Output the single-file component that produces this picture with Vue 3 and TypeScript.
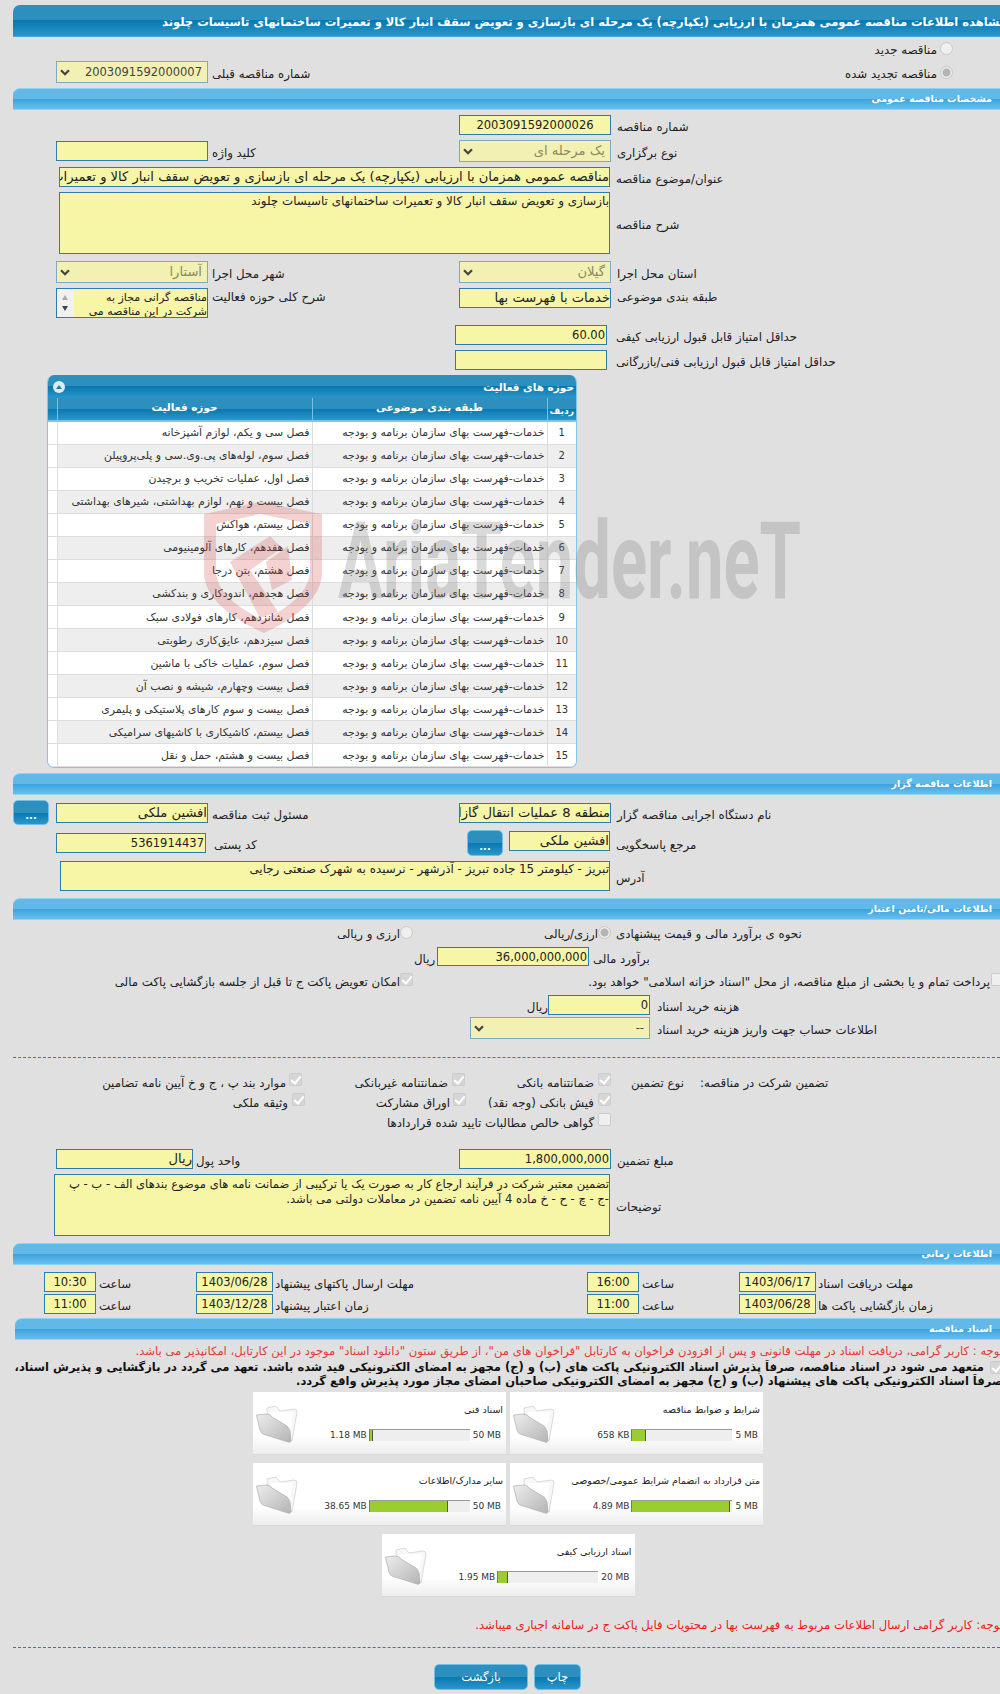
<script setup lang="ts">
const category = 'خدمات-فهرست بهای سازمان برنامه و بودجه'
const topics: string[] = [
  'فصل سی و یکم، لوازم آشپزخانه',
  'فصل سوم، لوله‌های پی.وی.سی و پلی‌پروپیلن',
  'فصل اول، عملیات تخریب و برچیدن',
  'فصل بیست و نهم، لوازم بهداشتی، شیرهای بهداشتی',
  'فصل بیستم، هواکش',
  'فصل هفدهم، کارهای آلومینیومی',
  'فصل هشتم، بتن درجا',
  'فصل هجدهم، اندودکاری و بندکشی',
  'فصل شانزدهم، کارهای فولادی سبک',
  'فصل سیزدهم، عایق‌کاری رطوبتی',
  'فصل سوم، عملیات خاکی با ماشین',
  'فصل بیست وچهارم، شیشه و نصب آن',
  'فصل بیست و سوم کارهای پلاستیکی و پلیمری',
  'فصل بیستم، کاشیکاری با کاشیهای سرامیکی',
  'فصل بیست و هشتم، حمل و نقل',
]
interface Doc { title: string; used: string; max: string; pct: number }
const docRows: Doc[][] = [
  [
    { title: 'اسناد فنی', used: '1.18 MB', max: '50 MB', pct: 3 },
    { title: 'شرایط و ضوابط مناقصه', used: '658 KB', max: '5 MB', pct: 14 },
  ],
  [
    { title: 'سایر مدارک/اطلاعات', used: '38.65 MB', max: '50 MB', pct: 78 },
    { title: 'متن قرارداد به انضمام شرایط عمومی/خصوصی', used: '4.89 MB', max: '5 MB', pct: 98 },
  ],
  [{ title: 'اسناد ارزیابی کیفی', used: '1.95 MB', max: '20 MB', pct: 10 }],
]
</script>

<template>
  <div class="page">
    <div class="bar title-bar"><span class="title-text">مشاهده اطلاعات مناقصه عمومی همزمان با ارزیابی (یکپارچه) یک مرحله ای بازسازی و تعویض سقف انبار کالا و تعمیرات ساختمانهای تاسیسات چلوند</span></div>

    <div class="radio-row r1"><span class="lbl">مناقصه جدید</span><span class="radio"></span></div>
    <div class="grid2 r2">
      <div class="cell left">
        <div class="inp sel w152 h22"><svg class="caret" viewBox="0 0 10 7"><path d="M1 1.2 L5 5.2 L9 1.2" /></svg><b class="dark digits">2003091592000007</b></div>
        <span class="lbl">شماره مناقصه قبلی</span>
      </div>
      <div class="radio-row"><span class="lbl">مناقصه تجدید شده</span><span class="radio dot"></span></div>
    </div>

    <div class="bar sec s1"><span>مشخصات مناقصه عمومی</span></div>

    <div class="grid2 r-num">
      <div></div>
      <div class="cell right"><div class="inp w152 center">2003091592000026</div><span class="lbl">شماره مناقصه</span></div>
    </div>
    <div class="grid2 r-type">
      <div class="cell left"><div class="inp w152"></div><span class="lbl">کلید واژه</span></div>
      <div class="cell right"><div class="inp sel w152 h22"><svg class="caret" viewBox="0 0 10 7"><path d="M1 1.2 L5 5.2 L9 1.2" /></svg><b class="gray">یک مرحله ای</b></div><span class="lbl">نوع برگزاری</span></div>
    </div>
    <div class="wide r-title">
      <div class="inp big full-title">مناقصه عمومی همزمان با ارزیابی (یکپارچه) یک مرحله ای بازسازی و تعویض سقف انبار کالا و تعمیرات ساختمانهای تاسیسات چلوند</div>
      <span class="lbl">عنوان/موضوع مناقصه</span>
    </div>
    <div class="wide r-desc">
      <div class="inp area desc">بازسازی و تعویض سقف انبار کالا و تعمیرات ساختمانهای تاسیسات چلوند</div>
      <span class="lbl mid">شرح مناقصه</span>
    </div>
    <div class="grid2 r-prov">
      <div class="cell left"><div class="inp sel w152 h22"><svg class="caret" viewBox="0 0 10 7"><path d="M1 1.2 L5 5.2 L9 1.2" /></svg><b class="gray">آستارا</b></div><span class="lbl">شهر محل اجرا</span></div>
      <div class="cell right"><div class="inp sel w152 h22"><svg class="caret" viewBox="0 0 10 7"><path d="M1 1.2 L5 5.2 L9 1.2" /></svg><b class="gray">گیلان</b></div><span class="lbl">استان محل اجرا</span></div>
    </div>
    <div class="grid2 r-cat">
      <div class="cell left top">
        <div class="listbox">
          <div class="scroll"><i class="up"></i><i class="down"></i></div>
          <div class="ltext">مناقصه گرانی مجاز به<br />شرکت در این مناقصه می</div>
        </div>
        <span class="lbl up-lbl">شرح کلی حوزه فعالیت</span>
      </div>
      <div class="cell right top">
        <div class="inp w152 big">خدمات با فهرست بها</div>
        <span class="lbl up-lbl">طبقه بندی موضوعی</span>
      </div>
    </div>
    <div class="score r-s1"><div class="inp w152 end">60.00</div><span class="lbl">حداقل امتیاز قابل قبول ارزیابی کیفی</span></div>
    <div class="score r-s2"><div class="inp w152"></div><span class="lbl">حداقل امتیاز قابل قبول ارزیابی فنی/بازرگانی</span></div>

    <div class="panel">
      <div class="panel-head">
        <span class="collapse"><i></i></span>
        <span class="ph-text">حوزه های فعالیت</span>
      </div>
      <table class="tbl">
        <thead>
          <tr>
            <th class="c-pad"></th>
            <th class="c-act">حوزه فعالیت</th>
            <th class="c-cat">طبقه بندی موضوعی</th>
            <th class="c-no">ردیف</th>
          </tr>
        </thead>
        <tbody>
          <tr v-for="(t, i) in topics" :key="i" :class="{ alt: i % 2 === 1 }">
            <td class="c-pad"></td>
            <td class="c-act">{{ t }}</td>
            <td class="c-cat">{{ category }}</td>
            <td class="c-no">{{ i + 1 }}</td>
          </tr>
        </tbody>
      </table>
    </div>

    <div class="bar sec s2"><span>اطلاعات مناقصه گزار</span></div>

    <div class="org1">
      <button class="dots" type="button">...</button>
      <div class="inp w152 big">افشین ملکی</div>
      <span class="lbl gap4">مسئول ثبت مناقصه</span>
      <div class="inp w152 big">منطقه 8 عملیات انتقال گازایران</div>
      <span class="lbl">نام دستگاه اجرایی مناقصه گزار</span>
    </div>
    <div class="org2">
      <div class="inp w150 num">5361914437</div>
      <span class="lbl gap8">کد پستی</span>
      <button class="dots" type="button">...</button>
      <div class="inp w101 big">افشین ملکی</div>
      <span class="lbl">مرجع پاسخگویی</span>
    </div>
    <div class="wide r-addr">
      <div class="inp area addr">تبریز - کیلومتر 15 جاده تبریز - آذرشهر - نرسیده به شهرک صنعتی رجایی</div>
      <span class="lbl mid">آدرس</span>
    </div>

    <div class="bar sec s3"><span>اطلاعات مالی/تامین اعتبار</span></div>

    <div class="fin-radio">
      <span class="lbl fr-a">ارزی و ریالی</span><span class="radio"></span>
      <div class="fr-gap"></div>
      <span class="lbl fr-b">ارزی/ریالی</span><span class="radio dot"></span>
      <span class="lbl fr-l">نحوه ی برآورد مالی و قیمت پیشنهادی</span>
    </div>
    <div class="fin-est">
      <span class="lbl unit">ریال</span>
      <div class="inp w152 num">36,000,000,000</div>
      <span class="lbl est-l">برآورد مالی</span>
    </div>
    <div class="fin-check">
      <span class="lbl fc-a">امکان تعویض پاکت ج تا قبل از جلسه بازگشایی پاکت مالی</span>
      <span class="cbx on"></span>
      <div class="fc-gap"></div>
      <span class="lbl fc-b">پرداخت تمام و یا بخشی از مبلغ مناقصه، از محل "اسناد خزانه اسلامی" خواهد بود.</span>
      <span class="cbx"></span>
    </div>
    <div class="fin-fee">
      <span class="lbl unit fee-u">ریال</span>
      <div class="inp w102 num">0</div>
      <span class="lbl l7">هزینه خرید اسناد</span>
    </div>
    <div class="fin-acc">
      <div class="inp sel w180 h22"><svg class="caret" viewBox="0 0 10 7"><path d="M1 1.2 L5 5.2 L9 1.2" /></svg><b class="dark digits">--</b></div>
      <span class="lbl l7">اطلاعات حساب جهت واریز هزینه خرید اسناد</span>
    </div>

    <div class="dash d1"></div>

    <div class="g-row g1">
      <span class="lbl a0">موارد بند پ ، ج و خ آیین نامه تضامین</span><span class="cbx on m3"></span>
      <span class="lbl a1">ضمانتنامه غیربانکی</span><span class="cbx on m4"></span>
      <span class="lbl a2">ضمانتنامه بانکی</span><span class="cbx on m4"></span>
      <span class="lbl g-type">نوع تضمین</span>
      <span class="lbl g-head">تضمین شرکت در مناقصه:</span>
    </div>
    <div class="g-row">
      <span class="lbl b0">وثیقه ملکی</span><span class="cbx on m4"></span>
      <span class="lbl b1">اوراق مشارکت</span><span class="cbx on m3"></span>
      <span class="lbl b2">فیش بانکی (وجه نقد)</span><span class="cbx on m4"></span>
    </div>
    <div class="g-row">
      <span class="lbl c0">گواهی خالص مطالبات تایید شده قراردادها</span><span class="cbx m4"></span>
    </div>

    <div class="amt">
      <div class="inp w137 big">ریال</div>
      <span class="lbl gap3">واحد پول</span>
      <div class="inp w152 num">1,800,000,000</div>
      <span class="lbl">مبلغ تضمین</span>
    </div>
    <div class="wide r-note">
      <div class="inp area note">تضمین معتبر شرکت در فرآیند ارجاع کار به صورت یک یا ترکیبی از ضمانت نامه های موضوع بندهای الف - ب - پ<br />-ج - چ - ح - خ ماده 4 آیین نامه تضمین در معاملات دولتی می باشد.</div>
      <span class="lbl mid">توضیحات</span>
    </div>

    <div class="bar sec s4"><span>اطلاعات زمانی</span></div>

    <div class="time t1">
      <div class="inp w52 center">10:30</div><span class="lbl tl1">ساعت</span>
      <div class="inp w77 center">1403/06/28</div><span class="lbl tl2">مهلت ارسال پاکتهای پیشنهاد</span>
      <div class="inp w52 center">16:00</div><span class="lbl tl1">ساعت</span>
      <div class="inp w77 center">1403/06/17</div><span class="lbl tl3">مهلت دریافت اسناد</span>
    </div>
    <div class="time t2">
      <div class="inp w52 center">11:00</div><span class="lbl tl1">ساعت</span>
      <div class="inp w77 center">1403/12/28</div><span class="lbl tl2">زمان اعتبار پیشنهاد</span>
      <div class="inp w52 center">11:00</div><span class="lbl tl1">ساعت</span>
      <div class="inp w77 center">1403/06/28</div><span class="lbl tl3">زمان بازگشایی پاکت ها</span>
    </div>

    <div class="bar sec s5"><span>اسناد مناقصه</span></div>

    <div class="clip-text red-1">توجه : کاربر گرامی، دریافت اسناد در مهلت قانونی و پس از افزودن فراخوان به کارتابل "فراخوان های من"، از طریق ستون "دانلود اسناد" موجود در این کارتابل، امکانپذیر می باشد.</div>
    <div class="clip-text bold-1"><span class="cbx on inline"></span>متعهد می شود در اسناد مناقصه، صرفاً پذیرش اسناد الکترونیکی پاکت های (ب) و (ج) مجهز به امضای الکترونیکی قید شده باشد. تعهد می گردد در بازگشایی و پذیرش اسناد،</div>
    <div class="clip-text bold-2">صرفاً اسناد الکترونیکی پاکت های پیشنهاد (ب) و (ج) مجهز به امضای الکترونیکی صاحبان امضای مجاز مورد پذیرش واقع گردد.</div>

    <div class="docs">
      <div v-for="(row, ri) in docRows" :key="ri" class="doc-row">
        <div v-for="d in row" :key="d.title" class="doc">
          <svg class="folder" viewBox="0 0 42 38" aria-hidden="true">
            <defs>
              <linearGradient id="fg" x1="0" y1="0" x2="1" y2="1">
                <stop offset="0" stop-color="#ededed" />
                <stop offset="1" stop-color="#b4b4b4" />
              </linearGradient>
            </defs>
            <path d="M11 3 L20 1 L24 6 L38 4 Q41 4 41 7 L36 36 L12 22 Z" fill="#f7f7f7" stroke="#d2d2d2" stroke-width=".8" />
            <path d="M15 7 L37 7 L34 26 L17 14 Z" fill="#ffffff" />
            <path d="M0.5 10 L11 9 Q14 9 16 12 L31 21 Q33 23 34 26 L35 36 Q34 38 32 37 L7 29 Q5 28 4 25 Z" fill="url(#fg)" stroke="#adadad" stroke-width=".7" />
          </svg>
          <div class="doc-body">
            <div class="doc-title">{{ d.title }}</div>
            <div class="doc-meter">
              <span class="m-max">{{ d.max }}</span>
              <div class="track"><div class="fill" :style="{ width: d.pct + '%' }"></div></div>
              <span class="m-used">{{ d.used }}</span>
            </div>
          </div>
        </div>
      </div>
    </div>

    <div class="clip-text red-2">توجه: کاربر گرامی ارسال اطلاعات مربوط به فهرست بها در محتویات فایل پاکت ج در سامانه اجباری میباشد.</div>
    <div class="dash d2"></div>

    <div class="actions">
      <button class="act back" type="button">بازگشت</button>
      <button class="act print" type="button">چاپ</button>
    </div>

    <div class="watermark" aria-hidden="true">
      <svg class="shield" viewBox="0 0 125 135">
        <path d="M4 14 L60 2 L122 14 L122 76 Q118 108 64 133 Q8 108 4 76 Z M16 24 L16 74 Q20 100 63 120 Q106 100 110 74 L110 24 L60 14 Z" fill="#d8504e" fill-rule="evenodd" />
        <path d="M30 62 L70 36 L82 48 L50 70 L78 112 L60 118 Z M66 62 L88 46 L92 80 L72 90 Z" fill="#d8504e" />
      </svg>
      <span class="wm-text">AriaTender.neT</span>
    </div>
  </div>
</template>

<style>
html, body { margin: 0; background: #e0e0e0; }
</style>

<style scoped>
.page {
  position: relative;
  width: 1000px;
  height: 1694px;
  overflow: hidden;
  box-sizing: border-box;
  padding-left: 13px;
  background: #e0e0e0;
  font-family: "DejaVu Sans", sans-serif;
  font-size: 11.8px;
  color: #222;
}
.bar {
  box-sizing: border-box;
  width: 1010px;
  border-radius: 7px 7px 0 0;
  color: #fff;
  font-weight: bold;
  white-space: nowrap;
}
.title-bar {
  margin-top: 5px;
  height: 32px;
  padding: 10px 0 0 149px;
  font-size: 11.5px;
  background: linear-gradient(#2d8fbe 0, #2d8fbe 50%, #0878ae 50%, #2b96cc 100%);
  border-bottom: 1px solid #4aa6dc;
}
.title-text { display: inline-block; direction: rtl; }
.sec {
  height: 22px;
  direction: rtl;
  padding: 3px 31px 0 0;
  font-size: 9.5px;
  line-height: 14px;
  background: linear-gradient(#62b8e6 0, #62b8e6 50%, #3ba2de 50%, #6abfee 100%);
  border-top: 1px solid #8fd3f4;
  border-bottom: 1px solid #8fd3f4;
}
.s1 { margin-top: 5px; }
.s2 { margin-top: 5px; }
.s3 { margin-top: 7px; }
.s4 { margin-top: 7px; }
.s5 { margin-top: 4px; margin-left: 2px; width: 1008px; }

.lbl {
  box-sizing: border-box;
  height: 20px;
  white-space: nowrap;
  direction: rtl;
  line-height: 20px;
  padding-top: 2px;
  flex: none;
}
.inp {
  box-sizing: border-box;
  height: 20px;
  flex: none;
  border: 1px solid #2b7cb1;
  background: #f7f5a6;
  direction: rtl;
  white-space: nowrap;
  overflow: hidden;
  font-size: 11.5px;
  line-height: 18px;
  color: #222;
}
.big { font-size: 13.1px; }
.num { direction: ltr; text-align: right; padding-right: 1px; }
.center { text-align: center; direction: ltr; }
.end { direction: ltr; text-align: right; padding-right: 1px; }
.w152 { width: 152px; }
.w150 { width: 150px; }
.w137 { width: 137px; }
.w180 { width: 180px; }
.w102 { width: 102px; }
.w101 { width: 101px; }
.w52 { width: 52px; }
.w77 { width: 77px; }
.h22 { height: 22px; line-height: 20px; }
.sel {
  display: flex;
  justify-content: space-between;
  align-items: center;
  direction: ltr;
  padding: 0 5px 0 3px;
  background: #f3f0b3;
  border-color: #7fa9c2;
}
.sel b { font-weight: normal; direction: rtl; font-size: 13.1px; }
.sel b.digits { font-size: 11.5px; color: #444; }
.gray { color: #8a8a60; }
.caret { width: 10px; height: 7px; flex: none; }
.caret path { fill: none; stroke: #444; stroke-width: 2.2; }

.radio {
  flex: none;
  box-sizing: border-box;
  display: inline-block;
  width: 13px; height: 13px;
  border-radius: 50%;
  border: 1px solid #c8c8c8;
  background: #efefef;
}
.radio.dot { background: radial-gradient(circle, #b4b4b4 0 3.5px, #ececec 4.5px); }
.cbx {
  flex: none;
  box-sizing: border-box;
  position: relative;
  display: inline-block;
  width: 13px; height: 13px;
  border: 1px solid #ccc;
  border-radius: 2px;
  background: #efefef;
  margin-bottom: 3px;
}
.cbx.on { background: #d6d6d6; }
.cbx.on::after {
  content: "";
  position: absolute;
  left: 3px; top: 0;
  width: 4px; height: 8px;
  border: solid #fff;
  border-width: 0 2px 2px 0;
  transform: rotate(40deg);
}

.radio-row {
  display: flex;
  align-items: center;
  justify-content: flex-end;
  gap: 3px;
  padding-right: 47px;
}
.r1 { margin-top: 1px; height: 20px; width: 987px; box-sizing: border-box; }
.r2 { margin-top: 3px; height: 22px; align-items: center; }
.grid2 {
  display: grid;
  grid-template-columns: 446px 541px;
}
.cell { display: flex; align-items: center; }
.cell.top { align-items: flex-start; }
.left { padding-left: 43px; gap: 4px; }
.right { gap: 6px; }
.r-num { margin-top: 5px; height: 20px; }
.r-type { margin-top: 5px; height: 22px; }
.wide {
  display: flex;
  align-items: flex-start;
  justify-content: flex-start;
  gap: 6px;
}
.r-title { margin-top: 5px; padding-left: 46px; }
.full-title { width: 551px; }
.r-desc { margin-top: 5px; padding-left: 46px; }
.area { white-space: normal; line-height: 16px; font-size: 11.9px; }
.desc { width: 551px; height: 62px; }
.mid { align-self: center; }
.r-prov { margin-top: 7px; height: 22px; }
.r-cat { margin-top: 5px; height: 30px; }
.up-lbl { line-height: 16px; padding-top: 1px; }
.listbox {
  box-sizing: border-box;
  flex: none;
  display: flex;
  width: 152px;
  height: 30px;
  border: 1px solid #2b7cb1;
  background: #f7f5a6;
  overflow: hidden;
}
.scroll {
  flex: none;
  position: relative;
  width: 17px;
  background: #f1f1f1;
}
.scroll i {
  position: absolute;
  left: 5px;
  border-left: 3.5px solid transparent;
  border-right: 3.5px solid transparent;
}
.up { top: 6px; border-bottom: 5px solid #aaa; }
.down { bottom: 6px; border-top: 5px solid #444; }
.ltext {
  flex: 1;
  direction: rtl;
  white-space: nowrap;
  overflow: hidden;
  padding-top: 2px;
  font-size: 11px;
  line-height: 14px;
  color: #222;
}
.score { display: flex; align-items: center; gap: 9px; padding-left: 442px; }
.r-s1 { margin-top: 7px; height: 20px; }
.r-s2 { margin-top: 5px; height: 20px; }

.panel {
  box-sizing: border-box;
  width: 530px;
  margin: 5px 0 0 34px;
  background: #fff;
  border-radius: 7px;
  border: 1px solid #86c5e8;
  border-top: 0;
  overflow: hidden;
}
.panel-head {
  box-sizing: border-box;
  height: 23px;
  display: flex;
  align-items: center;
  justify-content: space-between;
  padding: 0 2px 0 5px;
  color: #fff;
  font-weight: bold;
  font-size: 10.5px;
  direction: ltr;
  background: linear-gradient(#2d8fbe 0, #2d8fbe 50%, #0878ae 50%, #2b96cc 100%);
}
.ph-text { direction: rtl; }
.collapse {
  width: 12px; height: 12px;
  border-radius: 50%;
  background: #dfe9f2;
  display: flex;
  align-items: center;
  justify-content: center;
}
.collapse i {
  border-left: 3.5px solid transparent;
  border-right: 3.5px solid transparent;
  border-bottom: 4px solid #2a76a8;
}
.tbl {
  width: 100%;
  border-collapse: collapse;
  table-layout: fixed;
  font-size: 10.9px;
}
.tbl th {
  box-sizing: border-box;
  height: 23px;
  padding: 0 0 4px;
  color: #fff;
  font-weight: bold;
  font-size: 10.5px;
  direction: rtl;
  border-left: 1px solid #7cbfe6;
  border-bottom: 2px solid #76c8ec;
  background: linear-gradient(#2d8fbe 0, #2d8fbe 50%, #0878ae 50%, #2b96cc 100%);
}
.tbl th:first-child { border-left: 0; }
.tbl td {
  box-sizing: border-box;
  height: 23.07px;
  padding: 0 2px;
  direction: rtl;
  white-space: nowrap;
  overflow: hidden;
  text-align: right;
  border-left: 1px solid #ddd;
  border-bottom: 1px solid #ddd;
  color: #333;
}
.tbl tr.alt td { background: #eee; }
.tbl tr.alt td.c-pad { background: #fff; }
.tbl .c-pad { width: 9px; padding: 0; border-left: 0; }
.tbl .c-act { width: 255px; }
.tbl .c-cat { width: 235px; }
.tbl .c-no { width: 29px; text-align: center; font-size: 10px; }
.tbl th.c-no { font-size: 9.2px; padding: 2px 0 0; }

.org1, .org2, .amt, .fin-radio, .fin-est, .fin-check, .fin-fee, .fin-acc, .time, .g-row {
  display: flex;
  align-items: center;
}
.dots {
  box-sizing: border-box;
  flex: none;
  width: 36px;
  border: 1px solid #6ec0ea;
  border-radius: 5px;
  padding: 6px 0 0;
  color: #fff;
  font: bold 10px "DejaVu Sans", sans-serif;
  background: linear-gradient(#2d8fbe 0, #2d8fbe 50%, #0878ae 50%, #2b96cc 100%);
}
.org1 { margin-top: 5px; height: 25px; }
.org1 .dots { height: 25px; margin-right: 7px; }
.org1 .gap4 { margin-left: 4px; width: 247px; text-align: left; }
.org1 .lbl:last-child { margin-left: 6px; }
.org2 { margin-top: 5px; height: 26px; padding-left: 43px; }
.org2 .gap8 { margin-left: 8px; width: 253px; text-align: left; }
.org2 .dots { height: 26px; margin-right: 6px; }
.org2 .w101 { margin-bottom: 4px; }
.org2 .lbl:last-child { margin-left: 6px; }
.r-addr { margin-top: 5px; padding-left: 47px; }
.addr { width: 550px; height: 30px; line-height: 15px; }

.fin-radio { margin-top: 2px; height: 20px; padding-left: 324px; }
.fr-a { width: 63px; text-align: right; }
.fr-gap { width: 127px; flex: none; }
.fr-b { width: 58px; text-align: right; }
.fr-l { margin-left: 5px; }
.fin-est { margin-top: 5px; height: 19px; padding-left: 401px; }
.fin-est .inp { height: 19px; }
.unit { width: 23px; text-align: left; }
.fee-u { width: 20px; }
.est-l { margin-left: 4px; }
.fin-check { margin-top: 4px; height: 20px; padding-left: 99px; }
.fin-check .cbx { margin-bottom: 1px; }
.fc-a { width: 288px; text-align: right; }
.fc-gap { width: 167px; flex: none; }
.fc-b { width: 410px; text-align: right; margin-right: 1px; }
.fin-fee { margin-top: 5px; height: 20px; padding-left: 515px; }
.l7 { margin-left: 7px; }
.fin-acc { margin-top: 2px; height: 22px; padding-left: 457px; }

.dash { width: 987px; height: 0; border-top: 1px dashed #2b7cb1; }
.d1 { margin-top: 18px; }
.g-row { height: 20px; }
.g1 { margin-top: 13px; }
.m3 { margin-left: 3px; }
.m4 { margin-left: 4px; }
.a0, .a1, .a2, .b0, .b1, .b2, .c0 { text-align: right; }
.a0 { width: 273px; }
.a1 { width: 146px; }
.a2 { width: 129px; }
.g-type { margin-left: 20px; width: 53px; text-align: left; }
.g-head { margin-left: 16px; }
.b0 { width: 275px; }
.b1 { width: 145px; }
.b2 { width: 128px; }
.c0 { width: 581px; }

.amt { margin-top: 18px; height: 20px; padding-left: 43px; }
.amt .gap3 { margin-left: 3px; width: 263px; text-align: left; }
.amt .lbl:last-child { margin-left: 6px; }
.r-note { margin-top: 5px; padding-left: 41px; }
.note { width: 556px; height: 62px; padding-top: 2px; line-height: 14.5px; font-size: 11.55px; }

.time { height: 20px; padding-left: 31px; }
.t1 { margin-top: 7px; }
.t2 { margin-top: 2px; }
.tl1 { width: 100px; padding-left: 3px; box-sizing: border-box; text-align: left; }
.tl2 { width: 314px; padding-left: 2px; box-sizing: border-box; text-align: left; }
.tl3 { margin-left: 2px; }

.clip-text {
  width: 1003px;
  margin-left: -13px;
  box-sizing: border-box;
  direction: rtl;
  white-space: nowrap;
  overflow: hidden;
}
.red-1 { margin-top: 3px; line-height: 16px; color: #e03a3a; font-size: 11.6px; }
.bold-1, .bold-2 { font-weight: bold; font-size: 11.5px; color: #111; line-height: 14px; }
.bold-1 { margin-top: 1px; }
.inline { vertical-align: middle; margin: 0 0 0 6px; }

.docs { display: flex; flex-direction: column; gap: 8px; margin-top: 4px; }
.doc-row {
  display: flex;
  justify-content: center;
  gap: 4px;
  width: 990px;
}
.doc {
  box-sizing: border-box;
  width: 253px;
  height: 63px;
  display: flex;
  background: linear-gradient(#fff 0, #fff 70%, #ededed 100%);
  border-bottom: 1px solid #d8d8d8;
}
.folder { flex: none; width: 42px; height: 38px; margin: 13px 0 0 3px; }
.doc-body { flex: 1; padding: 12px 3px 0 0; direction: rtl; }
.doc-title { font-size: 9.5px; line-height: 12px; color: #222; white-space: nowrap; text-align: right; }
.doc-meter { display: flex; align-items: center; margin-top: 13px; padding-right: 2px; direction: rtl; font-size: 9px; color: #333; }
.m-max { flex: none; direction: ltr; white-space: nowrap; margin-left: 3px; }
.m-used { direction: ltr; white-space: nowrap; margin-right: 2px; }
.track {
  box-sizing: border-box;
  flex: none;
  width: 101px;
  height: 12px;
  direction: ltr;
  background: #eee;
  border-top: 1px solid #999;
  border-left: 1px solid #777;
}
.fill {
  height: 100%;
  box-sizing: border-box;
  background: #9acd32;
  border-right: 1px solid #555;
}

.red-2 { margin-top: 20px; line-height: 16px; color: #f01818; font-size: 11.7px; }
.d2 { margin-top: 14px; }
.actions { display: flex; gap: 6px; margin-top: 16px; padding-left: 421px; }
.act {
  box-sizing: border-box;
  height: 26px;
  border: 1px solid #6ec0ea;
  border-radius: 5px;
  padding: 0;
  color: #fff;
  font: 11.5px "DejaVu Sans", sans-serif;
  background: linear-gradient(#2d8fbe 0, #2d8fbe 50%, #0878ae 50%, #2b96cc 100%);
}
.back { width: 94px; }
.print { width: 47px; }

.watermark { position: absolute; inset: 0; pointer-events: none; }
.shield { position: absolute; left: 200px; top: 500px; width: 125px; height: 135px; opacity: .25; }
.wm-text {
  position: absolute;
  left: 338px;
  top: 501px;
  font: bold 108px Roboto, sans-serif;
  line-height: 120px;
  color: #7d7d7d;
  opacity: .28;
  white-space: nowrap;
  transform-origin: left top;
  transform: scaleX(.62);
}
</style>
